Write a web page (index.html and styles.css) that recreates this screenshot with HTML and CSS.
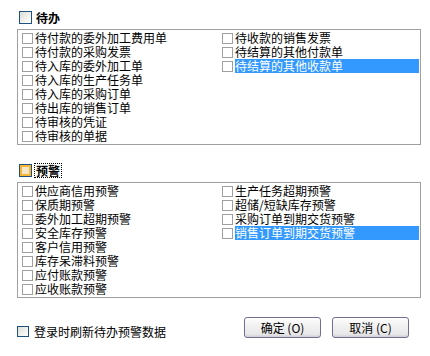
FILE: index.html
```html
<!DOCTYPE html>
<html lang="zh-CN">
<head>
  <meta charset="UTF-8" />
  <title>待办预警设置</title>
  <link rel="stylesheet" href="styles.css">
</head>
<body>
  <div class="dialog">
    <div class="group-head first">
      <span class="xp-check"></span>
      <span class="group-title">待办</span>
    </div>
    <div class="list-box">
      <div class="col">
        <div class="item"><span class="mini-check"></span><span class="label">待付款的委外加工费用单</span></div>
        <div class="item"><span class="mini-check"></span><span class="label">待付款的采购发票</span></div>
        <div class="item"><span class="mini-check"></span><span class="label">待入库的委外加工单</span></div>
        <div class="item"><span class="mini-check"></span><span class="label">待入库的生产任务单</span></div>
        <div class="item"><span class="mini-check"></span><span class="label">待入库的采购订单</span></div>
        <div class="item"><span class="mini-check"></span><span class="label">待出库的销售订单</span></div>
        <div class="item"><span class="mini-check"></span><span class="label">待审核的凭证</span></div>
        <div class="item"><span class="mini-check"></span><span class="label">待审核的单据</span></div>
      </div>
      <div class="col">
        <div class="item"><span class="mini-check"></span><span class="label">待收款的销售发票</span></div>
        <div class="item"><span class="mini-check"></span><span class="label">待结算的其他付款单</span></div>
        <div class="item"><span class="mini-check"></span><span class="label selected">待结算的其他收款单</span></div>
      </div>
    </div>

    <div class="group-head second">
      <span class="xp-check hot"></span>
      <span class="group-title focus">预警</span>
    </div>
    <div class="list-box">
      <div class="col">
        <div class="item"><span class="mini-check"></span><span class="label">供应商信用预警</span></div>
        <div class="item"><span class="mini-check"></span><span class="label">保质期预警</span></div>
        <div class="item"><span class="mini-check"></span><span class="label">委外加工超期预警</span></div>
        <div class="item"><span class="mini-check"></span><span class="label">安全库存预警</span></div>
        <div class="item"><span class="mini-check"></span><span class="label">客户信用预警</span></div>
        <div class="item"><span class="mini-check"></span><span class="label">库存呆滞料预警</span></div>
        <div class="item"><span class="mini-check"></span><span class="label">应付账款预警</span></div>
        <div class="item"><span class="mini-check"></span><span class="label">应收账款预警</span></div>
      </div>
      <div class="col">
        <div class="item"><span class="mini-check"></span><span class="label">生产任务超期预警</span></div>
        <div class="item"><span class="mini-check"></span><span class="label">超储/短缺库存预警</span></div>
        <div class="item"><span class="mini-check"></span><span class="label">采购订单到期交货预警</span></div>
        <div class="item"><span class="mini-check"></span><span class="label selected">销售订单到期交货预警</span></div>
      </div>
    </div>

    <div class="footer">
      <div class="refresh">
        <span class="xp-check"></span>
        <span>登录时刷新待办预警数据</span>
      </div>
      <div class="buttons">
        <button class="xp-btn">确定 (O)</button>
        <button class="xp-btn">取消 (C)</button>
      </div>
    </div>
  </div>
</body>
</html>
```

FILE: styles.css
```css
html, body {
  margin: 0;
  padding: 0;
  background: #fff;
  font-family: "Noto Sans CJK SC", "Noto Sans", sans-serif;
  font-size: 12px;
  color: #000;
}
.dialog {
  width: 430px;
  height: 356px;
  overflow: hidden;
}
.group-head {
  display: flex;
  align-items: center;
  gap: 3px;
  height: 13px;
  padding-left: 19px;
}
.group-head.first {
  margin-top: 11px;
}
.group-head.second {
  margin-top: 19px;
}
.group-title {
  font-weight: bold;
  line-height: 13px;
  padding: 0 1px;
}
.group-title.focus {
  outline: 1px dotted #000;
  outline-offset: 0;
}
.xp-check {
  display: inline-block;
  box-sizing: border-box;
  width: 13px;
  height: 13px;
  border: 1px solid #1c5180;
  background: linear-gradient(135deg, #dcdcd7 0%, #f2f2ee 60%, #fff 100%);
  flex: none;
}
.xp-check.hot {
  box-shadow: inset 0 0 0 2px #f8b636;
  background: #f4e6c8;
}
.list-box {
  box-sizing: border-box;
  width: 404px;
  height: 116px;
  margin: 5px 0 0 17px;
  padding: 1px 1px 0 3px;
  border: 1px solid #a0a0a0;
  display: grid;
  grid-template-columns: 200px 1fr;
}
.group-head.second + .list-box {
  margin-top: 5px;
}
.col {
  display: flex;
  flex-direction: column;
}
.item {
  display: flex;
  align-items: center;
  height: 14px;
  padding-left: 1px;
}
.mini-check {
  box-sizing: border-box;
  width: 11px;
  height: 11px;
  border: 1px solid #a0a0a0;
  margin-right: 2px;
  flex: none;
}
.label {
  line-height: 14px;
  white-space: nowrap;
}
.label.selected {
  flex: 1;
  background: #3399ff;
  color: #fff;
}
.footer {
  display: flex;
  align-items: flex-start;
  margin-top: 19px;
  padding-left: 17px;
}
.refresh {
  display: flex;
  align-items: center;
  gap: 5px;
  margin-top: 6px;
  line-height: 17px;
}
.refresh .xp-check {
  width: 12px;
  height: 11px;
}
.buttons {
  display: flex;
  gap: 11px;
  margin-left: 78px;
}
.xp-btn {
  box-sizing: border-box;
  width: 77px;
  height: 21px;
  padding: 0;
  border: 1px solid #6f6f8f;
  border-radius: 3px;
  background: linear-gradient(#ffffff 0%, #f4f4f4 30%, #e8e8ea 85%, #cfcfd6 100%);
  font-family: "Noto Sans CJK SC", "Noto Sans", sans-serif;
  font-size: 12px;
  color: #000;
}
```
